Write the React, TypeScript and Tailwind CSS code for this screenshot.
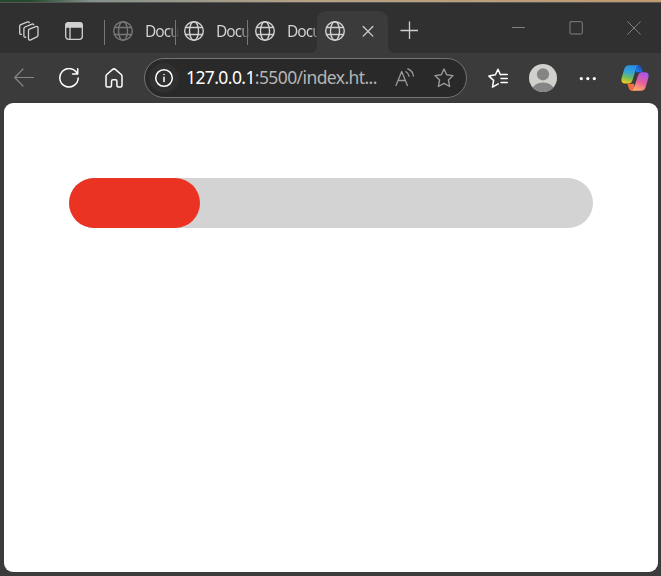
import type { ReactNode } from 'react';

type IconProps = { children: ReactNode; className?: string; size?: number; width?: number };

function Icon({ children, className = '', size = 20, width = 1.3 }: IconProps) {
  return (
    <svg
      width={size}
      height={size}
      viewBox={`0 0 ${size} ${size}`}
      fill="none"
      stroke="currentColor"
      strokeWidth={width}
      strokeLinecap="round"
      strokeLinejoin="round"
      className={`block shrink-0 ${className}`}
    >
      {children}
    </svg>
  );
}

function Globe({ className = '' }: { className?: string }) {
  return (
    <Icon className={className} width={1.4}>
      <circle cx="10" cy="10" r="9.3" />
      <ellipse cx="10" cy="10" rx="4.5" ry="9.3" />
      <path d="M1.6 6.5h16.8M1.6 13.5h16.8" />
    </Icon>
  );
}

function Tab({ spacing, dim = false }: { spacing: string; dim?: boolean }) {
  return (
    <div className={`flex h-[25px] items-start ${spacing} shrink-0 border-l border-[#777]`}>
      <Globe className={`mt-px ${dim ? 'text-[#777]' : 'text-[#d0d0d0]'}`} />
      <span className="-mt-px ml-3 bg-linear-to-r from-[#d5d5d5] from-70% to-[#303030] bg-clip-text text-[15.5px] leading-6 tracking-[-1px] whitespace-nowrap text-transparent">
        Docu
      </span>
    </div>
  );
}

function Copilot() {
  return (
    <svg width="28" height="26" viewBox="0 0 28 26" className="block shrink-0">
      <defs>
        <linearGradient id="left" x1="0.55" y1="0" x2="0.35" y2="1">
          <stop offset="0" stopColor="#278ee8" />
          <stop offset="0.4" stopColor="#38a5d0" />
          <stop offset="0.7" stopColor="#77bd57" />
          <stop offset="1" stopColor="#f2cc20" />
        </linearGradient>
        <linearGradient id="right" x1="0.7" y1="0" x2="0.3" y2="1">
          <stop offset="0" stopColor="#a954ed" />
          <stop offset="0.5" stopColor="#e45e9c" />
          <stop offset="1" stopColor="#ffad65" />
        </linearGradient>
        <linearGradient id="fold" x1="0" y1="1" x2="1" y2="0">
          <stop offset="0" stopColor="#208bea" />
          <stop offset="1" stopColor="#173dbe" />
        </linearGradient>
      </defs>
      <path d="M14 .2h3c2 0 3 1.1 3.6 3.1l1.3 4H15z" fill="url(#fold)" />
      <path d="M14 25.8h-2.7c-2 0-3-1.1-3.6-3.1l-1.3-4H13z" fill="#f16e43" />
      <path d="M8 .2h9.5c-1.3 0-2 1.2-2.5 3.1l-3.3 11.4c-.8 2.7-2.3 3.8-4.5 3.8H4C.8 18.5-.2 16.2.7 12.8L3.3 4C4 1.5 5.6.2 8 .2z" fill="url(#left)" />
      <path d="M20 25.8h-9.5c1.3 0 2-1.2 2.5-3.1l3.8-11.4c.8-2.7 2.3-4 4.5-4H24c3.2 0 4.2 2.3 3.3 5.7L24.7 22c-.7 2.5-2.3 3.8-4.7 3.8z" fill="url(#right)" />
    </svg>
  );
}

function TitleBar() {
  return (
    <div className="flex h-[50px] items-start bg-[#303030] text-[#d0d0d0]">
      <Icon className="mt-[18px] ml-[19px]">
        <path d="M10.3 8.2 17 5.6c1.2-.4 2 .1 2 1.2v7.4c0 .8-.4 1.3-1.1 1.6l-6.2 3c-1.3.6-2.2.1-2.2-1.2V9.5c0-.7.2-1.1.8-1.3Z" />
        <path d="M6.7 16.1c-1 .4-1.8-.1-1.8-1.2V7.6c0-.8.4-1.3 1.1-1.6l7-2.9c.9-.3 1.6 0 1.8.8M2.4 13.3c-1 .3-1.7-.2-1.7-1.3V5.3c0-.8.4-1.3 1.1-1.6L8.5.9c.9-.3 1.6 0 1.8.8" />
      </Icon>
      <Icon className="mt-[18px] ml-[25px]">
        <rect x="1.7" y="1.7" width="16.6" height="16.6" rx="2.8" />
        <path d="M2 3.5C2 2.5 2.8 2 4 2h12c1.4 0 2 .7 2 2v2H2z" fill="currentColor" />
        <path d="M6 6.5v11.8" />
      </Icon>
      <div className="mt-[17px] ml-5 flex">
        <Tab dim spacing="w-[71px] pl-2" />
        <Tab spacing="w-[72px] pl-2" />
        <Tab spacing="w-[70px] pl-[7px]" />
      </div>
      <div className="relative mt-2 flex h-[42px] w-[71px] shrink-0 rounded-t-[9px] bg-[#3b3b3b] pt-[10px] pl-2">
        <Globe />
        <Icon size={12} className="mt-1 ml-[17px]">
          <path d="m1.2 1.5 9.6 9.6m0-9.6-9.6 9.6" />
        </Icon>
        <svg width="8" height="8" viewBox="0 0 8 8" className="absolute bottom-0 -left-2">
          <path d="M8 0v8H0c5 0 8-3 8-8Z" fill="#3b3b3b" />
        </svg>
        <svg width="8" height="8" viewBox="0 0 8 8" className="absolute -right-2 bottom-0">
          <path d="M0 0v8h8C3 8 0 5 0 0Z" fill="#3b3b3b" />
        </svg>
      </div>
      <Icon size={18} className="mt-[18px] ml-3">
        <path d="M9.5.8v16.8M1 9.5h16.8" />
      </Icon>
      <div className="mt-[18px] mr-[20px] ml-auto flex gap-[44px] text-[#808080]">
        <Icon size={14} width={1}>
          <path d="M1.5 6.5h12" />
        </Icon>
        <Icon size={14} width={1}>
          <rect x="1" y=".7" width="12.3" height="12.3" rx="1" />
        </Icon>
        <Icon size={14} width={1}>
          <path d="m.7.7 12.6 12.6m0-12.6L.7 13.3" />
        </Icon>
      </div>
    </div>
  );
}

function Toolbar() {
  return (
    <div className="flex h-[50px] items-center bg-[#3b3b3b] text-white">
      <Icon className="ml-[14px] text-[#858585]" width={1.2}>
        <path d="M19.5 9.5H.7M9 1 .7 9.5 9 18" />
      </Icon>
      <Icon className="ml-[25px]" width={1.5}>
        <path d="M18.4 6A9.2 9.2 0 1 0 19.2 10M18.7.8V6h-5.2" />
      </Icon>
      <Icon className="ml-[25px]" width={1.5}>
        <path d="M2 8.3c0-.8.3-1.3.8-1.8l5.9-5.1c.9-.7 1.7-.7 2.6 0l5.9 5.1c.5.5.8 1 .8 1.8v9.1c0 1-.5 1.5-1.5 1.5h-2.1c-1 0-1.5-.5-1.5-1.5v-4c0-1-.6-1.6-1.5-1.6H9c-1 0-1.5.6-1.5 1.6v4c0 1-.5 1.5-1.5 1.5H3.5c-1 0-1.5-.5-1.5-1.5z" />
      </Icon>
      <div className="ml-[20px] flex h-10 w-[323px] shrink-0 items-center rounded-full border border-[#747474] bg-[#292929] pl-1">
        <div className="flex size-[30px] shrink-0 items-center justify-center rounded-full bg-[#303030]">
          <Icon width={1.5}>
            <circle cx="10" cy="10" r="8.3" />
            <path d="M10 9.3v4.1M10 6.4v.2" />
          </Icon>
        </div>
        <span className="-mt-[2px] ml-[7px] w-[195px] shrink-0 text-[17.5px] leading-[34px] tracking-[-0.59px] whitespace-nowrap text-[#b5b5b5]">
          <span className="text-white">127.0.0.1</span>:5500/index.ht...
        </span>
        <Icon className="ml-[14px] text-[#999]" width={1.3}>
          <path d="m1 17.5 5.7-14 5.7 14M3.2 12.5h7M11 3.7c1.6 1 2.7 2.4 3 4.5M12.8.8c3.2 1.3 5.4 4 5.6 7.2" />
        </Icon>
        <Icon className="ml-[19px] text-[#999]" width={1.4}>
          <path d="m10 1 2.7 5.8 6.3.8-4.6 4.3 1.2 6.6L10 15.3l-5.6 3.2 1.2-6.6L1 7.6l6.3-.8z" />
        </Icon>
      </div>
      <Icon className="ml-[21px]" width={1.5}>
        <path d="M12.9 6.7h-.5L10 1.2 7.4 6.8.9 8.1l4.7 4.3-1.1 6.7 5.7-3.2M13 6.5h6.3M13 10.5h6.3M13 14.5h6.3" />
      </Icon>
      <svg width="28" height="28" viewBox="0 0 28 28" className="ml-[21px] block shrink-0">
        <defs>
          <clipPath id="avatar">
            <circle cx="14" cy="14" r="14" />
          </clipPath>
        </defs>
        <g clipPath="url(#avatar)">
          <path d="M0 0h28v28H0z" fill="#d1d0cc" />
          <circle cx="14" cy="10.3" r="6.1" fill="#858585" />
          <ellipse cx="14" cy="25.5" rx="10.5" ry="7" fill="#858585" />
        </g>
      </svg>
      <Icon className="ml-[21px]" width={0}>
        <g fill="currentColor">
          <circle cx="3.3" cy="10.6" r="1.6" />
          <circle cx="9.8" cy="10.6" r="1.6" />
          <circle cx="16.3" cy="10.6" r="1.6" />
        </g>
      </Icon>
      <div className="ml-[23px]">
        <Copilot />
      </div>
    </div>
  );
}

export default function App() {
  return (
    <div className="flex h-[576px] w-[661px] flex-col overflow-hidden bg-[#3b3b3b] font-['Noto_Sans','Open_Sans',sans-serif]">
      <div className="flex h-[3px] shrink-0 border-b border-[#555]">
        <div className="h-full w-[300px] bg-linear-to-r from-[#25492b] from-10% via-[#83908b] via-30% to-[#b5a285]" />
        <div className="h-full flex-1 bg-linear-to-r from-[#b5a285] to-[#c19a70]" />
      </div>
      <TitleBar />
      <Toolbar />
      <main className="mr-[3px] ml-1 h-[469px] shrink-0 rounded-[9px] bg-white px-[65px] pt-[75px]">
        <div className="h-[50px] w-[524px] rounded-full bg-[#d3d3d3]">
          <div className="h-full w-1/4 rounded-full bg-[#eb3324]" />
        </div>
      </main>
    </div>
  );
}
